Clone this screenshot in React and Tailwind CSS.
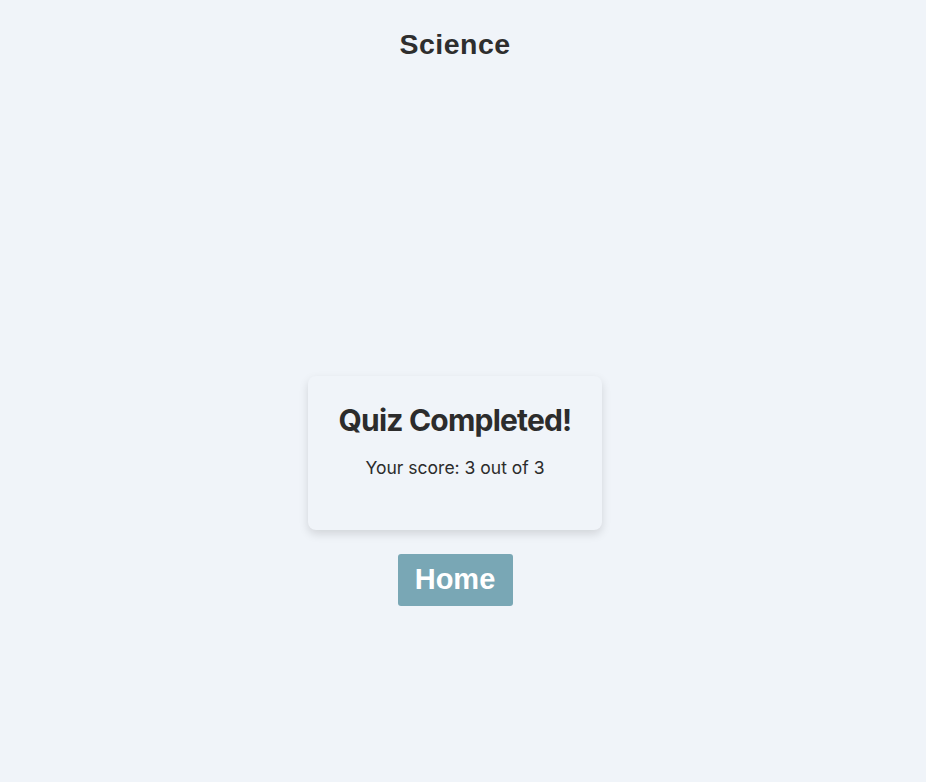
import React from "react";

const QuizResult = ({ score, total }) => (
  <div className="w-[294px] rounded-lg bg-[#f0f4f9] px-6 pt-[26px] pb-[50px] text-center shadow-[0_4px_10px_rgba(0,0,0,0.13)]">
    <h2 className="font-['Inter',sans-serif] text-[30px] font-bold leading-[36px] tracking-[-0.8px] text-[#2c2c2c]">
      Quiz Completed!
    </h2>
    <p className="mt-[18px] font-['Inter',sans-serif] text-[17.5px] leading-[24px] text-[#2c2c2c]">
      Your score: {score} out of {total}
    </p>
  </div>
);

export default function App() {
  return (
    <div className="min-h-[782px] bg-[#f0f4f9] pr-[16px] font-['Liberation_Sans',Arial,sans-serif]">
      <header className="pt-[26px] text-center">
        <h1 className="text-[28.5px] font-bold leading-[36px] tracking-[0.5px] text-[#2e2e2e]">
          Science
        </h1>
      </header>

      <main className="flex flex-col items-center pt-[314px]">
        <QuizResult score={3} total={3} />
        <button className="mt-6 h-[52px] w-[115px] rounded-[3px] bg-[#79a7b5] text-[29px] font-bold text-white">
          Home
        </button>
      </main>
    </div>
  );
}
